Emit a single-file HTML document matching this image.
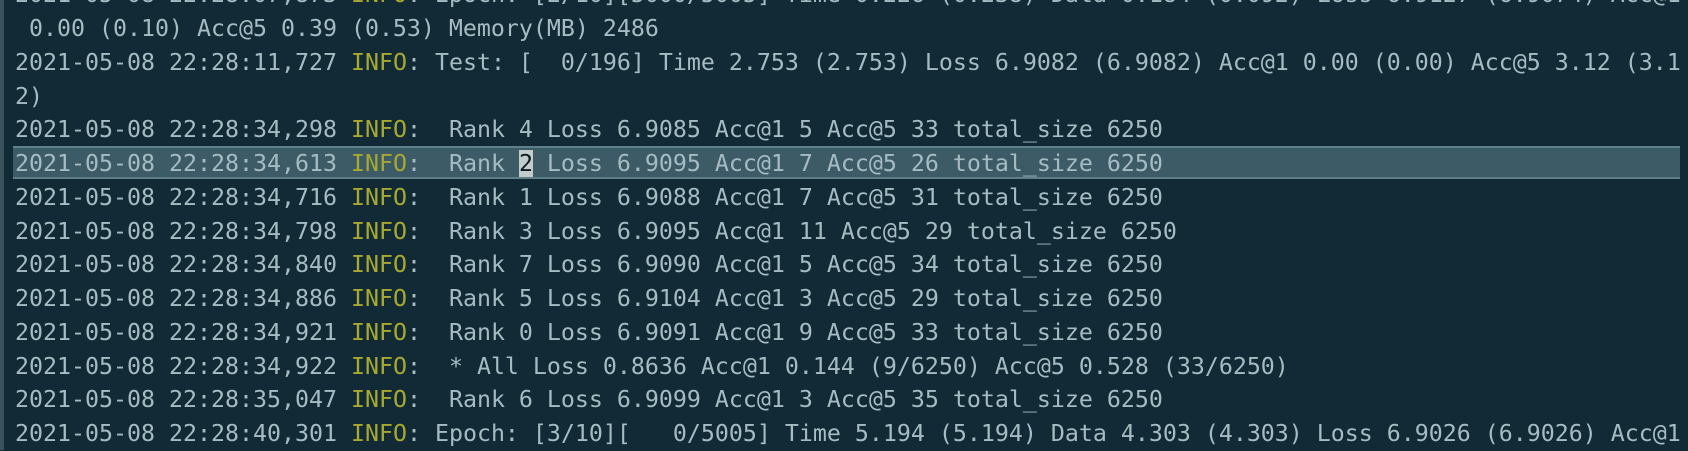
<!DOCTYPE html>
<html><head><meta charset="utf-8"><style>
html,body{margin:0;padding:0;}
body{width:1688px;height:450px;overflow:hidden;background:#112a36;position:relative;
font-family:"DejaVu Sans Mono","Liberation Mono",monospace;font-size:23.25px;color:#a7bcc2;}
.strip{position:absolute;left:0;top:0;width:4px;height:450px;background:#3a525c;}
.hl{position:absolute;left:13px;top:146px;width:1667px;height:33px;background:#3c5b67;
border-top:2px solid #5f8088;border-bottom:2px solid #5f8088;box-sizing:border-box;}
.l{position:absolute;left:15px;white-space:pre;height:33.75px;line-height:33.75px;}
.i{color:#a7a930;}
.cur{background:#c3cbcb;color:#0c1a20;}
</style></head><body>
<div class="strip"></div>
<div class="hl"></div>
<div class="l" style="top:-21.7px">2021-05-08 22:28:07,873 <span class="i">INFO</span>: Epoch: [2/10][5000/5005] Time 0.226 (0.238) Data 0.184 (0.092) Loss 6.9127 (6.9074) Acc@1</div>
<div class="l" style="top:12.05px"> 0.00 (0.10) Acc@5 0.39 (0.53) Memory(MB) 2486</div>
<div class="l" style="top:45.8px">2021-05-08 22:28:11,727 <span class="i">INFO</span>: Test: [  0/196] Time 2.753 (2.753) Loss 6.9082 (6.9082) Acc@1 0.00 (0.00) Acc@5 3.12 (3.1</div>
<div class="l" style="top:79.55px">2)</div>
<div class="l" style="top:113.3px">2021-05-08 22:28:34,298 <span class="i">INFO</span>:  Rank 4 Loss 6.9085 Acc@1 5 Acc@5 33 total_size 6250</div>
<div class="l" style="top:147.05px">2021-05-08 22:28:34,613 <span class="i">INFO</span>:  Rank <span class="cur">2</span> Loss 6.9095 Acc@1 7 Acc@5 26 total_size 6250</div>
<div class="l" style="top:180.8px">2021-05-08 22:28:34,716 <span class="i">INFO</span>:  Rank 1 Loss 6.9088 Acc@1 7 Acc@5 31 total_size 6250</div>
<div class="l" style="top:214.55px">2021-05-08 22:28:34,798 <span class="i">INFO</span>:  Rank 3 Loss 6.9095 Acc@1 11 Acc@5 29 total_size 6250</div>
<div class="l" style="top:248.3px">2021-05-08 22:28:34,840 <span class="i">INFO</span>:  Rank 7 Loss 6.9090 Acc@1 5 Acc@5 34 total_size 6250</div>
<div class="l" style="top:282.05px">2021-05-08 22:28:34,886 <span class="i">INFO</span>:  Rank 5 Loss 6.9104 Acc@1 3 Acc@5 29 total_size 6250</div>
<div class="l" style="top:315.8px">2021-05-08 22:28:34,921 <span class="i">INFO</span>:  Rank 0 Loss 6.9091 Acc@1 9 Acc@5 33 total_size 6250</div>
<div class="l" style="top:349.55px">2021-05-08 22:28:34,922 <span class="i">INFO</span>:  * All Loss 0.8636 Acc@1 0.144 (9/6250) Acc@5 0.528 (33/6250)</div>
<div class="l" style="top:383.3px">2021-05-08 22:28:35,047 <span class="i">INFO</span>:  Rank 6 Loss 6.9099 Acc@1 3 Acc@5 35 total_size 6250</div>
<div class="l" style="top:417.05px">2021-05-08 22:28:40,301 <span class="i">INFO</span>: Epoch: [3/10][   0/5005] Time 5.194 (5.194) Data 4.303 (4.303) Loss 6.9026 (6.9026) Acc@1</div>
</body></html>
